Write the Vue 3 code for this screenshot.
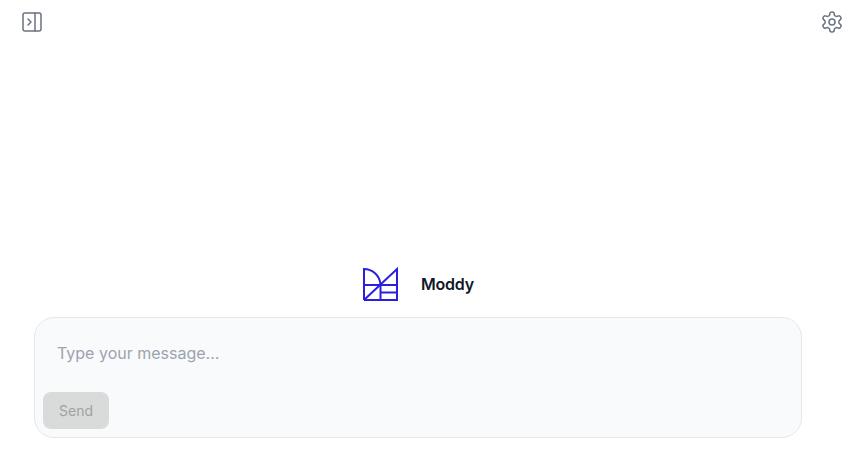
<script setup>
</script>

<template>
  <div class="page">
    <header class="top">
      <button class="icon-btn" aria-label="Toggle sidebar">
        <svg width="24" height="24" viewBox="0 0 24 24" fill="none" stroke="#6b7280" stroke-width="1.5" stroke-linecap="round" stroke-linejoin="round">
          <rect x="3" y="3" width="18" height="18" rx="2" />
          <path d="M15 3v18" />
          <path d="M8 9l3 3-3 3" />
        </svg>
      </button>
      <button class="icon-btn" aria-label="Settings">
        <svg width="24" height="24" viewBox="0 0 24 24" fill="none" stroke="#6b7280" stroke-width="1.5" stroke-linecap="round" stroke-linejoin="round">
          <path d="M12.22 2h-.44a2 2 0 0 0-2 2v.18a2 2 0 0 1-1 1.73l-.43.25a2 2 0 0 1-2 0l-.15-.08a2 2 0 0 0-2.73.73l-.22.38a2 2 0 0 0 .73 2.73l.15.1a2 2 0 0 1 1 1.72v.51a2 2 0 0 1-1 1.74l-.15.09a2 2 0 0 0-.73 2.73l.22.38a2 2 0 0 0 2.73.73l.15-.08a2 2 0 0 1 2 0l.43.25a2 2 0 0 1 1 1.73V20a2 2 0 0 0 2 2h.44a2 2 0 0 0 2-2v-.18a2 2 0 0 1 1-1.73l.43-.25a2 2 0 0 1 2 0l.15.08a2 2 0 0 0 2.73-.73l.22-.39a2 2 0 0 0-.73-2.73l-.15-.08a2 2 0 0 1-1-1.74v-.5a2 2 0 0 1 1-1.74l.15-.09a2 2 0 0 0 .73-2.73l-.22-.38a2 2 0 0 0-2.73-.73l-.15.08a2 2 0 0 1-2 0l-.43-.25a2 2 0 0 1-1-1.73V4a2 2 0 0 0-2-2z" />
          <circle cx="12" cy="12" r="3" />
        </svg>
      </button>
    </header>

    <main class="main">
      <div class="brand">
        <svg class="logo" width="36" height="36" viewBox="0 0 36 36" fill="none" stroke="#2a1fdc" stroke-width="2">
          <path d="M2 34V3C10 3 18 9 18.500 19" />
          <path d="M2 34H35V3L2 34" />
          <path d="M2 19H35" />
          <path d="M18.500 19V34" />
          <path d="M18.500 26.500H35" />
        </svg>
        <span class="name">Moddy</span>
      </div>
      <form class="composer" @submit.prevent>
        <input class="field" type="text" placeholder="Type your message..." />
        <button class="send" type="submit" disabled>Send</button>
      </form>
    </main>
  </div>
</template>

<style scoped>
.page {
  width: 854px;
  height: 476px;
  display: flex;
  flex-direction: column;
  background: #fff;
  font-family: "Inter", "Liberation Sans", sans-serif;
}
.top {
  display: flex;
  justify-content: space-between;
  padding: 10px 10px 0 20px;
}
.icon-btn {
  width: 24px;
  height: 24px;
  padding: 0;
  border: 0;
  background: none;
}
.icon-btn svg {
  display: block;
}
.main {
  flex: 1;
  display: flex;
  flex-direction: column;
  justify-content: flex-end;
  padding: 0 52px 38px 34px;
}
.brand {
  display: flex;
  align-items: center;
  justify-content: center;
  gap: 23px;
  margin-bottom: 15px;
}
.logo {
  display: block;
}
.name {
  font-size: 16px;
  font-weight: 600;
  color: #111827;
  letter-spacing: -0.2px;
}
.composer {
  height: 121px;
  box-sizing: border-box;
  border: 1px solid #e5e7eb;
  border-radius: 20px;
  background: #f9fafb;
  padding: 8px;
  display: flex;
  flex-direction: column;
  align-items: flex-start;
  justify-content: space-between;
}
.field {
  width: 100%;
  box-sizing: border-box;
  border: 0;
  outline: 0;
  background: transparent;
  padding: 17px 14px 0;
  font: 16px "Inter", "Liberation Sans", sans-serif;
  color: #111827;
}
.field::placeholder {
  color: #9ca3af;
  opacity: 1;
}
.send {
  width: 66px;
  height: 37px;
  border: 0;
  border-radius: 8px;
  background: #d9dbdb;
  color: #9ca3a3;
  font: 14px "Inter", "Liberation Sans", sans-serif;
}
</style>
